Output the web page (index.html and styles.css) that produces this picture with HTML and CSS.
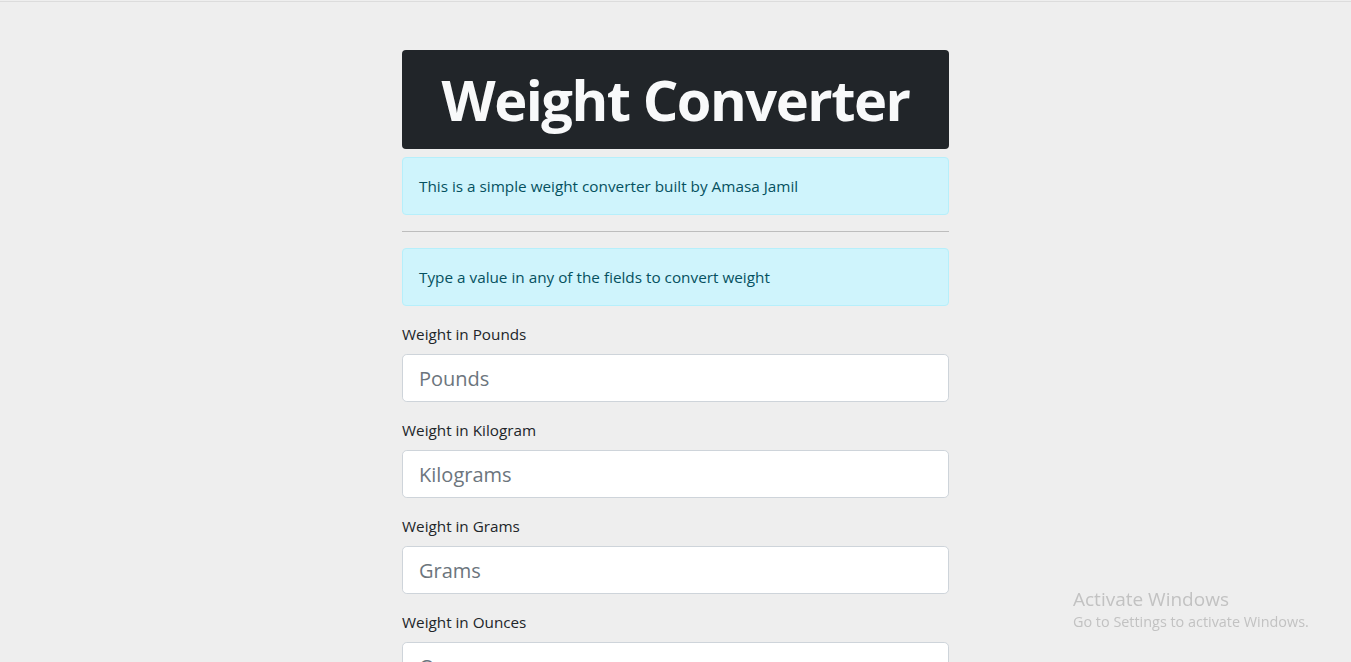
FILE: index.html
```html
<!DOCTYPE html>
<html lang="en">
<head>
<meta charset="utf-8">
<title>Weight Converter</title>
<link rel="stylesheet" href="styles.css">
</head>
<body>
<div class="topline"></div>
<main class="container">
  <div class="header">
    <h1 class="title">Weight Converter</h1>
  </div>
  <div class="alert">This is a simple weight converter built by Amasa Jamil</div>
  <hr class="rule">
  <div class="alert">Type a value in any of the fields to convert weight</div>
  <form class="form">
    <div class="group">
      <label class="label" for="lbs">Weight in Pounds</label>
      <input class="input" id="lbs" type="number" placeholder="Pounds">
    </div>
    <div class="group">
      <label class="label" for="kg">Weight in Kilogram</label>
      <input class="input" id="kg" type="number" placeholder="Kilograms">
    </div>
    <div class="group">
      <label class="label" for="g">Weight in Grams</label>
      <input class="input" id="g" type="number" placeholder="Grams">
    </div>
    <div class="group">
      <label class="label" for="oz">Weight in Ounces</label>
      <input class="input" id="oz" type="number" placeholder="Ounces">
    </div>
  </form>
</main>
<div class="watermark">
  <div class="wm-title">Activate Windows</div>
  <div class="wm-sub">Go to Settings to activate Windows.</div>
</div>
</body>
</html>
```
FILE: styles.css
```css
* { box-sizing: border-box; }
html, body { margin: 0; padding: 0; }
body {
  background: #eeeeee;
  font-family: "Open Sans", "Noto Sans", sans-serif;
  font-size: 16px;
  line-height: 1.5;
  color: #212529;
  overflow: hidden;
}
.topline {
  margin-top: 1px;
  height: 1px;
  background: #dcdcdc;
}
.container {
  width: 547px;
  margin: 48px auto 0;
}
.header {
  background: #212529;
  border-radius: 4px;
  padding: 16px 0;
  margin-bottom: 8px;
  text-align: center;
}
.title {
  margin: 0;
  color: #f8f9fa;
  font-size: 56px;
  font-weight: 700;
  line-height: 1.2;
  letter-spacing: -1.5px;
}
.alert {
  background: #cff4fc;
  border: 1px solid #b6effb;
  color: #055160;
  border-radius: 4px;
  padding: 16px;
  margin-bottom: 16px;
  font-size: 15.3px;
  line-height: 24px;
}
.rule {
  margin: 0 0 16px;
  border: 0;
  border-top: 1px solid #bdbdbd;
}
.form { margin: 0; }
.group { margin-bottom: 16px; }
.label {
  display: block;
  margin-bottom: 8px;
  font-size: 15.25px;
  line-height: 24px;
}
.input {
  display: block;
  width: 100%;
  height: 48px;
  padding: 8px 16px;
  font-family: inherit;
  font-size: 20px;
  line-height: 30px;
  color: #212529;
  background: #fff;
  border: 1px solid #ced4da;
  border-radius: 4.8px;
  outline: none;
}
.input::placeholder { color: #6c757d; }
.watermark {
  position: fixed;
  left: 1073px;
  top: 586px;
  color: #c2c2c2;
  font-family: "Open Sans", "Noto Sans", sans-serif;
}
.wm-title { font-size: 19px; line-height: 26px; }
.wm-sub { font-size: 14.4px; line-height: 20px; }
```
